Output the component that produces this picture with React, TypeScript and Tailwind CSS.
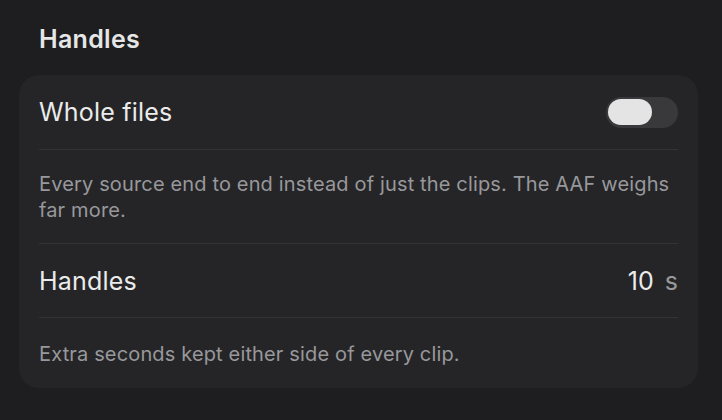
import React from 'react';

const fontStack = { fontFamily: 'Inter, "Noto Sans", "DejaVu Sans", sans-serif' };

const Toggle: React.FC<{ on?: boolean }> = ({ on = false }) => (
  <div className="flex h-[31px] w-[72px] items-center rounded-full bg-[#39393b] px-[2px]">
    <div className={`h-[26px] w-[44px] rounded-full bg-[#e4e4e4] ${on ? 'ml-auto' : ''}`} />
  </div>
);

export default function App() {
  return (
    <div className="h-[420px] w-[722px] overflow-hidden bg-[#1e1e20] pl-[19px] pr-[24px]" style={fontStack}>
      <h1 className="pl-5 pt-[25px] text-[25px] font-semibold leading-[28px] tracking-[0.3px] text-[#e6e6e6]">Handles</h1>

      <div className="mt-[22px] rounded-[20px] bg-[#252527]">
        <div className="mx-5 flex h-[75px] items-center justify-between border-b border-[#333335]">
          <span className="text-[25px] leading-[28px] tracking-[0.2px] text-[#ebebeb]">Whole files</span>
          <Toggle />
        </div>
        <div className="mx-5 border-b border-[#333335] pb-[20px] pt-[21px]">
          <p className="text-[20px] leading-[26px] tracking-[0.15px] text-[#98989c]">
            Every source end to end instead of just the clips. The AAF weighs far more.
          </p>
        </div>

        <div className="mx-5 flex h-[74px] items-center justify-between border-b border-[#333335]">
          <span className="text-[25px] leading-[28px] tracking-[0.2px] text-[#ebebeb]">Handles</span>
          <div className="flex items-baseline gap-[11px] text-[25px] leading-[28px]">
            <span className="text-[#ebebeb]">10</span>
            <span className="text-[#98989c]">s</span>
          </div>
        </div>
        <div className="mx-5 pb-[21px] pt-[23px]">
          <p className="text-[20px] leading-[26px] tracking-[0.15px] text-[#98989c]">Extra seconds kept either side of every clip.</p>
        </div>
      </div>
    </div>
  );
}
